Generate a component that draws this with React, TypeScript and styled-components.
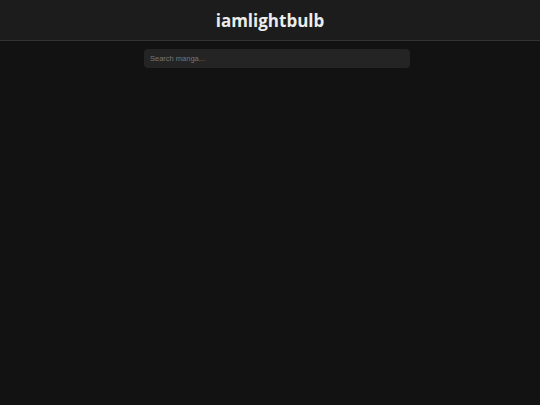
import styled, { createGlobalStyle } from "styled-components";

const GlobalStyle = createGlobalStyle`
  html, body {
    margin: 0;
    padding: 0;
    background: #121212;
    min-height: 100%;
  }
  body {
    font-family: "Open Sans", "Noto Sans", sans-serif;
    color: #eee;
  }
`;

const Page = styled.div`
  min-height: 405px;
  background: #121212;
`;

const Header = styled.header`
  height: 41px;
  display: flex;
  align-items: center;
  justify-content: center;
  background: #1c1c1c;
  border-bottom: 1px solid #333;
  box-sizing: border-box;
`;

const Title = styled.h1`
  margin: 0;
  font-family: "Open Sans", sans-serif;
  font-weight: 700;
  font-size: 17px;
  color: #ececec;
`;

const SearchRow = styled.div`
  display: flex;
  justify-content: center;
  padding: 8px 0 0 14px;
`;

const SearchInput = styled.input`
  width: 266px;
  height: 19px;
  box-sizing: border-box;
  border: none;
  border-radius: 4px;
  background: #242424;
  color: #ddd;
  padding: 0 6px;
  font-family: "Liberation Sans", Arial, sans-serif;
  font-size: 7.5px;
  outline: none;
  &::placeholder {
    color: #777;
  }
`;

export default function App() {
  return (
    <Page>
      <GlobalStyle />
      <Header>
        <Title>iamlightbulb</Title>
      </Header>
      <SearchRow>
        <SearchInput placeholder="Search manga..." />
      </SearchRow>
    </Page>
  );
}
